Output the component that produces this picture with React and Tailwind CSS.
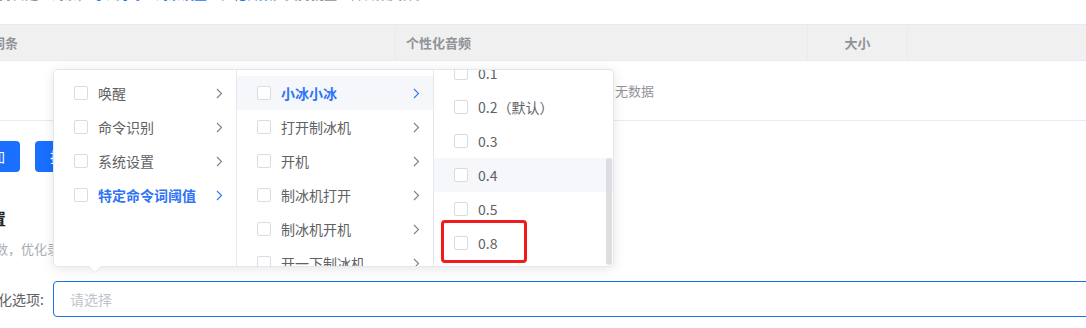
import React from "react";

const Check = () => (
  <span className="w-[14px] h-[14px] shrink-0 border border-[#d9dce3] rounded-[2px] bg-white" />
);

const Arrow = ({ active }) => (
  <svg width="7" height="11" viewBox="0 0 7 11" className="shrink-0">
    <path d="M1 1l4.5 4.5L1 10" fill="none" stroke={active ? "#2f74f5" : "#7d8087"} strokeWidth="1.1" />
  </svg>
);

const Item = ({ label, active, hover, arrow = true }) => (
  <div className={`h-[34px] flex items-center pl-[20px] pr-[13px] ${hover ? "bg-[#f5f7fa]" : ""}`}>
    <Check />
    <span
      className={`ml-[10px] flex-1 text-[14px] whitespace-nowrap ${
        active ? "text-[#2f74f5] font-bold" : "text-[#606266]"
      }`}
    >
      {label}
    </span>
    {arrow && <Arrow active={active} />}
  </div>
);

export default function App() {
  const col1 = ["唤醒", "命令识别", "系统设置", "特定命令词阈值"];
  const col2 = ["小冰小冰", "打开制冰机", "开机", "制冰机打开", "制冰机开机", "开一下制冰机"];
  const col3 = ["0.1", "0.2（默认）", "0.3", "0.4", "0.5", "0.8"];

  return (
    <div className="relative w-[1086px] h-[328px] overflow-hidden bg-white font-['Noto_Sans_CJK_SC','Noto_Sans',sans-serif]">
      {/* top hint line, mostly scrolled out */}
      <div className="h-[24px] overflow-hidden">
        <div className="mt-[-13px] ml-[-14px] text-[13px] leading-[13px] whitespace-nowrap text-[#909399]">
          支持自定义词条，<span className="text-[#2f74f5]">可以为每个词条设置个性化音频</span>，支持批量上传音频文件。
        </div>
      </div>

      {/* table */}
      <div className="ml-[-18px] w-[1320px]">
        <div className="flex h-[37px] border-y border-[#e9e9ef] bg-[#f0f0f0] text-[13px] font-bold text-[#909399]">
          <div className="w-[414px] flex items-center pl-[10px] border-r border-[#e9e9ef]">词条</div>
          <div className="w-[412px] flex items-center pl-[10px] border-r border-[#e9e9ef]">个性化音频</div>
          <div className="w-[100px] flex items-center justify-center border-r border-[#e9e9ef]">大小</div>
          <div className="flex-1" />
        </div>
        <div className="h-[60px] border-b border-[#e9e9ef] flex items-center pl-[633px] text-[13px] text-[#909399]">
          无数据
        </div>
      </div>

      {/* buttons */}
      <div className="mt-[20px] ml-[-38px] flex gap-[15px]">
        <button className="h-[31px] px-[15px] rounded-[4px] bg-[#1a6fff] text-white text-[14px]">添加</button>
        <button className="h-[31px] px-[15px] rounded-[4px] bg-[#1a6fff] text-white text-[14px]">批量导入</button>
      </div>

      <div className="mt-[36px] ml-[-26px] h-[20px] leading-[20px] text-[16px] font-bold text-[#222]">设置</div>
      <div className="mt-[12px] ml-[-44px] h-[18px] leading-[18px] text-[13px] text-[#a8abb2] whitespace-nowrap">
        识别参数，优化录入体验
      </div>

      {/* form row */}
      <div className="mt-[23px] ml-[-100px] flex items-center w-[1300px]">
        <label className="w-[144px] text-right text-[14px] text-[#606266]">个性化选项:</label>
        <div className="ml-[9px] flex-1 h-[36px] border border-[#1d6fe9] rounded-[4px] flex items-center pl-[16px] text-[14px] text-[#c0c4cc]">
          请选择
        </div>
      </div>

      {/* cascader dropdown */}
      <div className="absolute left-[53px] top-[69px] w-[561px] h-[198px] flex bg-white border border-[#e4e7ed] rounded-[4px] shadow-[0_2px_12px_rgba(0,0,0,0.1)]">
        <div className="w-[183px] border-r border-[#e4e7ed] pt-[6px]">
          {col1.map((l, i) => (
            <Item key={l} label={l} active={i === 3} />
          ))}
        </div>
        <div className="w-[197px] border-r border-[#e4e7ed] pt-[6px] overflow-hidden">
          {col2.map((l, i) => (
            <Item key={l} label={l} active={i === 0} hover={i === 0} />
          ))}
        </div>
        <div className="relative flex-1 overflow-hidden">
          <div className="mt-[-14px]">
            {col3.map((l, i) => (
              <Item key={l} label={l} hover={i === 3} arrow={false} />
            ))}
          </div>
          <div className="absolute right-[1px] top-[88px] w-[6px] h-[107px] rounded-full bg-[#dddee0]" />
        </div>
      </div>

      {/* popper arrow */}
      <svg className="absolute left-[89px] top-[266px]" width="12" height="7" viewBox="0 0 12 7">
        <path d="M0 0.5L6 6.5L12 0.5" fill="white" stroke="#e4e7ed" />
        <rect x="1" y="0" width="10" height="1" fill="white" />
      </svg>

      {/* annotation */}
      <div className="absolute left-[441px] top-[220px] w-[86px] h-[43px] border-[3px] border-[#f21b1b] rounded-[4px]" />
    </div>
  );
}
